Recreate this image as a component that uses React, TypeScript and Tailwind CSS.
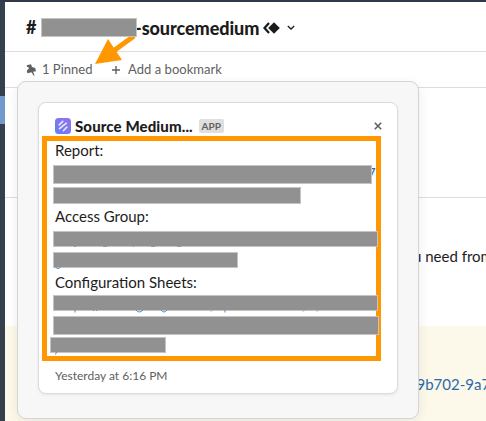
import React from "react";

function Redaction({ className }: { className: string }) {
  return <div className={`border border-[#c4c4c4] bg-[#919191] ${className}`} />;
}

function AppLogo() {
  return (
    <svg className="h-4 w-4 shrink-0" viewBox="0 0 16 16">
      <defs>
        <linearGradient id="logo" x1="0" y1="1" x2="1" y2="0">
          <stop offset="0" stopColor="#6080f8" />
          <stop offset="1" stopColor="#9870e8" />
        </linearGradient>
      </defs>
      <rect width="16" height="16" rx="3.5" fill="url(#logo)" />
      <path d="M4.2 6.9 7.8 3.4M4.5 10.6 11.3 5.2M8.4 12.7l3.5-3.7" stroke="#eeeaff" strokeWidth="1.5" strokeLinecap="round" />
    </svg>
  );
}

function PinIcon() {
  return (
    <svg className="h-3 w-3 shrink-0" viewBox="0 0 12 12" fill="#616061">
      <path d="M.8 1.2 5 .2 6 2.9 9.2 4.1 10 7.2 7 7.7 8.6 11.3 7.8 11.7 5.4 8.2 1.4 9.2.8 6.8 2.8 4.4 2.4 3.1.9 3Z" />
    </svg>
  );
}

function Header() {
  return (
    <div className="flex h-[50px] shrink-0 items-center border-b border-[#dddddd] pl-[21px] pt-[2px] text-[18px] font-black text-[#1d1c1d]">
      <span className="w-[14.5px]">#</span>
      <Redaction className="relative z-30 -mt-[1px] h-[19px] w-[96.5px] border-[#9c9c9c]" />
      <span className="-ml-[2px] leading-6 tracking-[-0.07px]">-sourcemedium</span>
      <svg className="ml-[4px] h-3 w-[17px]" viewBox="0 0 17 12">
        <path d="M6 1 1.5 6 6 11" fill="none" stroke="#1d1c1d" strokeWidth="2.3" />
        <path d="m11 .2 5.8 5.8L11 11.8 5.2 6z" fill="#1d1c1d" />
      </svg>
      <svg className="ml-[7px] h-2 w-2" viewBox="0 0 8 8" fill="none" stroke="#1d1c1d" strokeWidth="1.3">
        <path d="m.8 2 3.2 3 3.2-3" />
      </svg>
    </div>
  );
}

function Bookmarks() {
  return (
    <div className="flex h-[36px] shrink-0 items-center border-b border-[#dddddd] pl-[21px] text-[13px] text-[#616061]">
      <PinIcon />
      <span className="ml-[4px] w-[51px] whitespace-nowrap">1 Pinned</span>
      <svg className="ml-[19px] h-2 w-2" viewBox="0 0 8 8" stroke="#616061" strokeWidth="1.4">
        <path d="M0 4h8M4 0v8" />
      </svg>
      <span className="ml-[8px] tracking-[0.04px]">Add a bookmark</span>
    </div>
  );
}

function PinnedCard() {
  return (
    <div className="flex h-[292px] w-[360px] flex-col rounded-lg border border-[#dcdcdc] bg-white shadow-[0_1px_3px_rgba(0,0,0,0.08)]">
      <div className="flex h-[33px] shrink-0 items-center pl-4 pr-[15px] pt-[13px]">
        <AppLogo />
        <span className="ml-[4px] text-[15px] font-black leading-5 tracking-[0.11px] text-[#1d1c1d]">Source Medium...</span>
        <span className="ml-[6px] flex h-[14px] w-[25px] items-center justify-center rounded-[2px] bg-[#dfdfdf] text-[10px] font-bold text-[#616061]">APP</span>
        <svg className="ml-auto h-2 w-2" viewBox="0 0 8 8" stroke="#616061" strokeWidth="1.6">
          <path d="m.8.8 6.4 6.4M7.2.8.8 7.2" />
        </svg>
      </div>
      <div className="ml-[3px] flex h-[225px] w-[339px] shrink-0 flex-col border-[5px] border-[#ff9800] text-[15px] leading-[22px] text-[#1d1c1d]">
        <p className="-mt-[2px] mb-[2px] h-6 shrink-0 pl-2">Report:</p>
        <div className="flex h-[19px] shrink-0 pl-[6px]">
          <Redaction className="relative z-10 h-[19px] w-[318.5px]" />
          <span className="-ml-[4.5px] -mt-[3px] text-[#2a6baa]">7</span>
        </div>
        <Redaction className="ml-[6px] mt-[3px] h-[17px] w-[248px] shrink-0" />
        <p className="ml-2 mt-[1px] h-[26px] shrink-0">Access Group:</p>
        <Redaction className="ml-[6px] h-4 w-[325px] shrink-0" />
        <svg className="-mt-px ml-[6px] h-[6px] w-[325px] shrink-0" viewBox="0 0 325 6" fill="none" stroke="#7f9fbd">
          <path d="M21 .5h2M50 .5h4M80 .5h1M98 .5h4M124 .5h4" />
        </svg>
        <Redaction className="ml-[6px] h-4 w-[185px] shrink-0" />
        <svg className="-mt-px ml-[6px] h-[5px] w-[20px] shrink-0" viewBox="0 0 20 5" fill="none" stroke="#528bc2">
          <path d="M2.5.5q2.5 2 5 0" />
        </svg>
        <p className="-mt-px ml-2 h-[24px] shrink-0">Configuration Sheets:</p>
        <Redaction className="ml-[6px] h-4 w-[325px] shrink-0" />
        <svg className="-mt-px ml-[6px] h-[6px] w-[325px] shrink-0" viewBox="0 0 325 6" fill="none" stroke="#528bc2">
          <path d="M22 0v2.5M40 .5h1M43 .5h1M83 0q3 4 7 0M108 0q3 4 6 0M159 .5l-1 1M172 0v2.5M251 .5l-1 1M265 .5l-1 1" />
        </svg>
        <Redaction className="ml-[6px] h-[19px] w-[326px] shrink-0" />
        <Redaction className="ml-[3px] mt-[2px] h-4 w-[116px] shrink-0" />
        <svg className="-mt-px ml-[6px] h-[3px] w-[10px] shrink-0" viewBox="0 0 10 3" stroke="#528bc2">
          <path d="M3.5 0 2.5 2.5" />
        </svg>
      </div>
      <p className="ml-4 mt-[5px] text-[12px] leading-5 text-[#616061]">Yesterday at 6:16 PM</p>
    </div>
  );
}

export default function App() {
  return (
    <div className="relative flex h-[421px] w-[486px] flex-col overflow-hidden bg-white font-[Lato,sans-serif]">
      <div className="h-[2px] shrink-0 bg-[#303849]" />
      <div className="flex min-h-0 flex-1">
        <div className="w-[5px] shrink-0 bg-[#35404f] pt-[94px]">
          <div className="h-7 bg-[#7199cc]" />
        </div>
        <main className="flex min-w-0 flex-1 flex-col">
          <Header />
          <Bookmarks />
          <div className="h-[110px] shrink-0 border-b border-[#dddddd]" />
          <div className="h-[128px] shrink-0 pl-[408px] pt-[47px] text-[15px] leading-[22px] text-[#1d1c1d]">
            <span className="whitespace-nowrap">u need from</span>
          </div>
          <div className="flex-1 bg-[#fcf8ea] pl-[412px] pt-[47px] text-[15px] leading-[22px] text-[#2a6baa]">
            <span className="-ml-[0.5px] whitespace-nowrap">9b702-9a7</span>
          </div>
        </main>
      </div>
      <div className="absolute left-[17px] top-[81px] z-10 h-[338px] w-[402px] rounded-[9px] border border-[#d5d5d2] bg-[#f7f7f7] pl-5 pt-5 shadow-[0_3px_12px_rgba(0,0,0,0.08)]">
        <PinnedCard />
      </div>
      <svg className="absolute left-[93px] top-[33px] z-20 h-8 w-[46px]" viewBox="0 0 46 32">
        <path d="M41 3 19 19" stroke="#ff9800" strokeWidth="5" />
        <path d="m15 6 14 21-27 4z" fill="#ff9800" />
      </svg>
    </div>
  );
}
